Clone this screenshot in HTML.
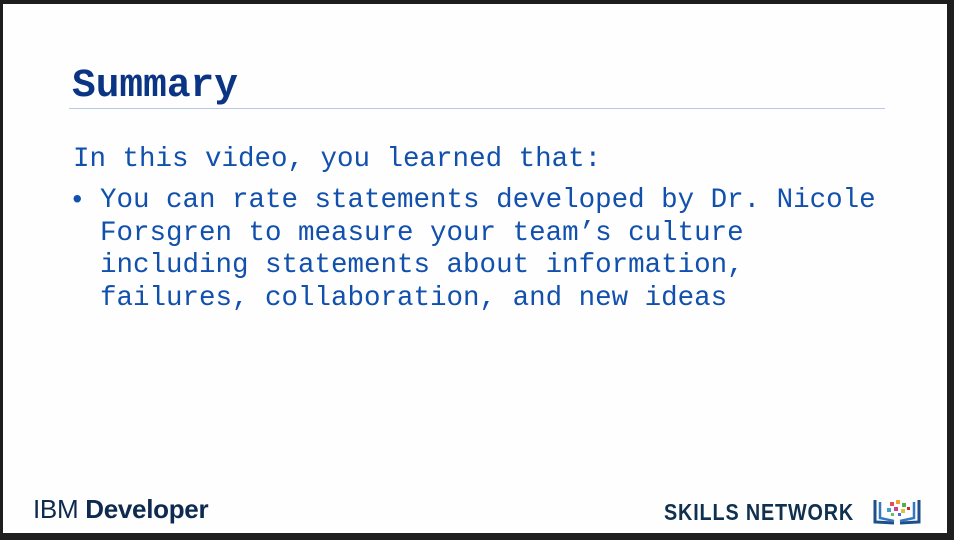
<!DOCTYPE html>
<html><head><style>
html,body{margin:0;padding:0;}
body{width:954px;height:540px;background:#1e1e1e;position:relative;overflow:hidden;}
.slide{position:absolute;left:3px;top:4px;width:944px;height:529px;background:#fdfefd;}
.t{position:absolute;font-family:"Liberation Mono",monospace;color:#1150ad;white-space:pre;}
</style></head><body>
<div class="slide"></div>
<div class="t" style="left:72px;top:63px;font-size:39.5px;font-weight:bold;line-height:46px;color:#0b3584;">Summary</div>
<div style="position:absolute;left:69px;top:108px;width:816px;height:1px;background:#b8cbe6;"></div>
<div class="t" style="left:73px;top:144px;font-size:27.5px;line-height:32.5px;">In this video, you learned that:</div>
<div class="t" style="left:69px;top:186px;font-size:27.5px;line-height:32.5px;">•</div>
<div class="t" style="left:100px;top:185px;font-size:27.5px;line-height:32.5px;">You can rate statements developed by Dr. Nicole
Forsgren to measure your team’s culture
including statements about information,
failures, collaboration, and new ideas</div>
<div style="position:absolute;left:33px;top:494px;font-family:'Liberation Sans',sans-serif;font-size:26px;color:#0e2a4f;letter-spacing:-0.3px;">IBM <b>Developer</b></div>
<div style="position:absolute;left:664px;top:499px;font-family:'Liberation Sans',sans-serif;font-weight:bold;font-size:23px;color:#10304f;transform:scaleX(0.86);transform-origin:left;letter-spacing:1px;">SKILLS NETWORK</div>
<svg style="position:absolute;left:872px;top:497px" width="50" height="30" viewBox="0 0 50 30">
<path d="M3 3 V25 L22 26 M47 3 V25 L28 26" stroke="#1e4f8a" stroke-width="3" fill="none"/>
<path d="M8 5 V21 L22 24 M42 5 V21 L28 24" stroke="#3478c0" stroke-width="2.5" fill="none"/>
<rect x="18" y="5" width="4" height="4" fill="#e05050"/><rect x="24" y="3" width="4" height="4" fill="#f0a030"/>
<rect x="30" y="6" width="4" height="4" fill="#50b050"/><rect x="15" y="11" width="4" height="4" fill="#40a0d0"/>
<rect x="22" y="10" width="4" height="4" fill="#d04090"/><rect x="29" y="12" width="4" height="4" fill="#e0c040"/>
<rect x="35" y="10" width="3" height="3" fill="#c03030"/><rect x="19" y="16" width="3" height="3" fill="#60c060"/>
<rect x="26" y="16" width="3" height="3" fill="#4070d0"/>
</svg>
</body></html>
